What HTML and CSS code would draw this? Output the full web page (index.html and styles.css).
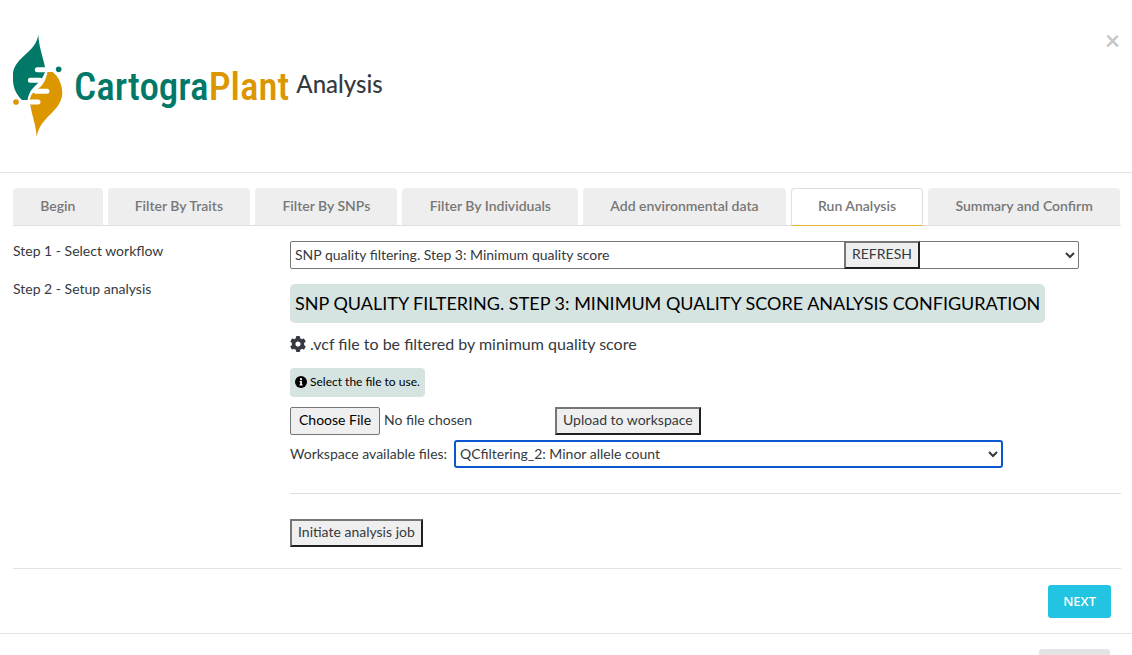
FILE: index.html
```html
<!DOCTYPE html>
<html lang="en">
<head>
<meta charset="utf-8">
<title>CartograPlant Analysis</title>
<link rel="stylesheet" href="styles.css">
</head>
<body>
<main class="modal">
  <header class="modal-header">
    <div class="brand">
      <svg class="brand-leaf" viewBox="39 45 156 309" aria-hidden="true">
        <path fill="#027868" d="M115 45C117 84 130 112 135 142L137 158C130 176 120 182 112 194C98 208 88 220 88 240H66C47 222 39 200 39 180V160C45 110 105 100 115 45Z"/>
        <path fill="#db9600" d="M142 156H158C176 170 187 194 187 220C185 274 118 292 110 351C108 312 96 290 91 254L88 240C90 224 104 215 116 205C132 192 139 176 142 156Z"/>
        <g stroke="#fff" stroke-width="15" stroke-linecap="round" fill="none">
          <path d="M112 149H134M91 181H120M108 214H141M94 246H114"/>
        </g>
        <path stroke="#fff" stroke-width="7" fill="none" d="M140 149C137 176 118 190 106 202C96 211 88 220 85 246"/>
        <circle cx="176" cy="148" r="8.500" fill="#027868"/>
        <circle cx="48" cy="246" r="8.500" fill="#db9600"/>
      </svg>
      <span class="brand-name">Cartogra<span class="brand-accent">Plant</span></span>
      <h1 class="title">Analysis</h1>
    </div>
    <button class="close" type="button" aria-label="Close">×</button>
  </header>

  <div class="modal-body">
    <nav class="tabs">
      <button class="tab" type="button">Begin</button>
      <button class="tab" type="button">Filter By Traits</button>
      <button class="tab" type="button">Filter By SNPs</button>
      <button class="tab" type="button">Filter By Individuals</button>
      <button class="tab" type="button">Add environmental data</button>
      <button class="tab tab-active" type="button">Run Analysis</button>
      <button class="tab" type="button">Summary and Confirm</button>
    </nav>

    <section class="step">
      <label class="step-label" for="workflow">Step 1 - Select workflow</label>
      <div class="workflow">
        <select class="select workflow-select" id="workflow">
          <option>SNP quality filtering. Step 3: Minimum quality score</option>
        </select>
        <button class="button refresh" type="button">REFRESH</button>
      </div>
      <div class="step-label">Step 2 - Setup analysis</div>
      <div class="setup">
        <h2 class="config-title">SNP quality filtering. Step 3: Minimum quality score analysis configuration</h2>
        <h3 class="input-title">
          <svg class="gear" viewBox="8 8 496 496" aria-hidden="true"><path fill="currentColor" d="M487.400 315.700l-42.600-24.600c4.300-23.200 4.300-47 0-70.200l42.600-24.600c4.900-2.800 7.100-8.600 5.500-14-11.100-35.600-30-67.800-54.700-94.600-3.800-4.100-10-5.100-14.800-2.300L380.800 110c-17.900-15.400-38.500-27.300-60.800-35.100V25.800c0-5.600-3.900-10.500-9.400-11.700-36.700-8.200-74.300-7.800-109.200 0-5.500 1.200-9.400 6.100-9.400 11.700V75c-22.200 7.900-42.800 19.800-60.800 35.100L88.700 85.500c-4.900-2.800-11-1.900-14.800 2.300-24.700 26.700-43.600 58.900-54.700 94.600-1.700 5.400.6 11.200 5.500 14L67.300 221c-4.300 23.200-4.300 47 0 70.200l-42.600 24.600c-4.900 2.800-7.100 8.600-5.500 14 11.100 35.600 30 67.800 54.700 94.600 3.800 4.100 10 5.100 14.800 2.300l42.600-24.600c17.900 15.400 38.500 27.300 60.800 35.100v49.200c0 5.600 3.900 10.500 9.400 11.700 36.700 8.200 74.300 7.800 109.200 0 5.500-1.200 9.400-6.100 9.400-11.700v-49.200c22.200-7.900 42.800-19.800 60.800-35.100l42.600 24.600c4.900 2.800 11 1.900 14.800-2.300 24.700-26.700 43.600-58.900 54.700-94.600 1.500-5.500-.7-11.300-5.600-14.100zM256 336c-44.100 0-80-35.900-80-80s35.900-80 80-80 80 35.900 80 80-35.900 80-80 80z"/></svg>
          .vcf file to be filtered by minimum quality score
        </h3>
        <p class="hint">
          <svg class="info" viewBox="0 0 12 12" aria-hidden="true"><circle cx="6" cy="6" r="6" fill="#000"/><circle cx="6" cy="3.200" r="1.100" fill="#fff"/><path fill="#fff" d="M4.600 5H6.900V8.300H7.500V9.400H4.600V8.300H5.200V6.100H4.600Z"/></svg>
          Select the file to use.
        </p>
        <div class="upload">
          <input class="file" type="file" aria-label="File to upload">
          <button class="button" type="button">Upload to workspace</button>
        </div>
        <div class="workspace">
          <label for="files">Workspace available files:</label>
          <select class="select select-focus" id="files">
            <option>QCfiltering_2: Minor allele count</option>
          </select>
        </div>
        <hr class="rule">
        <button class="button" type="button">Initiate analysis job</button>
      </div>
    </section>

    <div class="actions">
      <button class="next" type="button">NEXT</button>
    </div>
  </div>

  <footer class="modal-footer">
    <button class="footer-button" type="button"></button>
  </footer>
</main>
</body>
</html>
```
FILE: styles.css
```css
* {
  box-sizing: border-box;
}

body {
  margin: 0;
  background: #fff;
  color: #343a40;
  font: 14px/20px Lato, "Open Sans", sans-serif;
}

button,
input,
select {
  color: inherit;
  font: inherit;
}

.modal {
  height: 100vh;
  overflow: hidden;
}

.modal-header {
  display: flex;
  justify-content: space-between;
  align-items: flex-start;
  padding: 35px 12px 35px 13px;
  border-bottom: 1px solid #e2e2e2;
}

.brand {
  display: flex;
  align-items: center;
  height: 102px;
}

.brand-leaf {
  width: 52px;
  height: 103px;
  margin-right: 9px;
}

.brand-name {
  margin-top: 2px;
  color: #027868;
  font: 500 39px/48px "Roboto Condensed", "Liberation Sans Narrow", "Open Sans Condensed", sans-serif;
}

.brand-accent {
  color: #db9600;
}

.title {
  margin: 0 0 5px 7px;
  font-size: 24px;
  line-height: 32px;
  font-weight: 500;
}

.close {
  padding: 0;
  border: 0;
  background: none;
  color: #c8c8c8;
  font: bold 26px/10px Lato, sans-serif;
}

.modal-body {
  padding: 15px 11px 15px 13px;
}

.tabs {
  display: flex;
  gap: 5px;
  padding-right: 1px;
  border-bottom: 1px solid #dedede;
}

.tab {
  flex: auto;
  height: 37px;
  padding: 0 24px 2px;
  border: 1px solid #eee;
  border-bottom: 0;
  border-radius: 4px 4px 0 0;
  background: #eee;
  color: #777;
  font-weight: 600;
  white-space: nowrap;
}

.tab-active {
  height: 38px;
  margin-bottom: -1px;
  border: 1px solid #dedede;
  border-bottom-color: #e6b032;
  background: #fff;
}

.step {
  display: grid;
  grid-template-columns: 1fr 3fr;
  row-gap: 10px;
  padding-top: 15px;
}

.step-label {
  align-self: start;
}

.workflow {
  position: relative;
}

.setup {
  padding-top: 5px;
}

.select {
  height: 28px;
  padding: 0 0 1px;
  border: 1px solid #767676;
  border-radius: 2px;
  background: #fff;
}

.workflow-select {
  display: block;
  width: 95%;
}

.button {
  height: 28px;
  padding: 0 6px 2px;
  border: 2px solid #767676;
  border-color: #767676 #212121 #212121 #767676;
  background: #efefef;
}

.refresh {
  position: absolute;
  top: 0;
  left: 66.667%;
}

.config-title {
  width: fit-content;
  margin: 0;
  padding: 5px;
  border-radius: 5px;
  background: #d5e3e1;
  color: #000;
  font-size: 18px;
  line-height: 29px;
  font-weight: 400;
  text-transform: uppercase;
}

.input-title {
  display: flex;
  align-items: center;
  gap: 4px;
  margin: 11px 0 14px;
  font-size: 16px;
  line-height: 20px;
  font-weight: 400;
}

.gear {
  width: 16px;
  height: 16px;
}

.hint {
  display: flex;
  align-items: center;
  gap: 3px;
  width: fit-content;
  margin: 0 0 10px;
  padding: 4px 5px 6px;
  border-radius: 4px;
  background: #d5e3e1;
  color: #000;
  font-size: 12px;
  line-height: 19px;
}

.info {
  width: 12px;
  height: 12px;
}

.upload {
  display: flex;
  margin-bottom: 5px;
}

.file {
  width: 265px;
}

.file::file-selector-button {
  height: 28px;
  padding: 0 8px 2px;
  border: 1px solid #767676;
  border-radius: 2px;
  background: #efefef;
  color: #000;
  font: inherit;
}

.workspace {
  display: flex;
  align-items: center;
  gap: 7px;
}

.select-focus {
  width: 66%;
  border: 2px solid #0b57d0;
  border-radius: 3px;
}

.rule {
  margin: 25px 0;
  border: 0;
  border-top: 1px solid #dedede;
}

.actions {
  display: flex;
  justify-content: flex-end;
  margin-top: 21px;
  padding: 16px 10px 0 0;
  border-top: 1px solid #e2e2e2;
}

.next {
  height: 33px;
  padding: 0 15px 2px;
  border: 0;
  border-radius: 3px;
  background: #23c3e2;
  color: #fff;
  font: 600 13px/20px "Open Sans", sans-serif;
}

.modal-footer {
  display: flex;
  justify-content: flex-end;
  padding: 15px 22px;
  border-top: 1px solid #e2e2e2;
}

.footer-button {
  width: 71px;
  height: 33px;
  border: 0;
  border-radius: 3px;
  background: #e4e4e4;
}
```
